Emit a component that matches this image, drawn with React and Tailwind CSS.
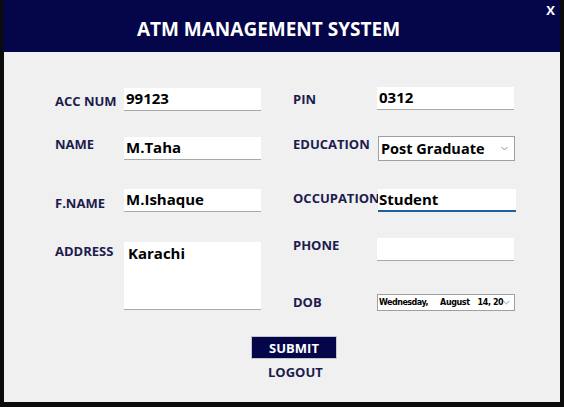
import React from 'react';

const label = 'text-[13px] leading-[18px] font-bold text-[#1c1c4e]';
const field = 'h-[23px] w-[137px] bg-white border-b border-[#a8a8a8] px-[2px] text-[15px] leading-[21px] font-bold text-black';

function Row({ className, children }) {
  return <div className={`flex items-start ${className}`}>{children}</div>;
}

export default function App() {
  return (
    <div
      className="w-[564px] h-[407px] bg-[#0b0b0b] pl-[3px] pr-[4px] pb-[5px] flex flex-col overflow-hidden"
      style={{ fontFamily: '"Open Sans", "Noto Sans", sans-serif' }}
    >
      {/* title bar */}
      <div className="relative h-[52px] bg-[#05064a] flex items-center justify-center pr-[26px] pt-[6px] shrink-0">
        <h1 className="text-white text-[19px] font-bold">ATM MANAGEMENT SYSTEM</h1>
        <span className="absolute right-[5px] top-[1px] text-white text-[13px] font-bold">X</span>
      </div>

      {/* form body */}
      <div className="flex-1 bg-[#f0f0f0] ml-[1px] flex flex-col">
        <div className="flex pl-[51px]">
          {/* left column */}
          <div className="flex flex-col w-[238px]">
            <Row className="mt-[36px]">
              <span className={`${label} w-[69px] mt-[4px]`}>ACC NUM</span>
              <div className={field}>99123</div>
            </Row>
            <Row className="mt-[24px]">
              <span className={`${label} w-[69px]`}>NAME</span>
              <div className={`${field} mt-[2px]`}>M.Taha</div>
            </Row>
            <Row className="mt-[29px]">
              <span className={`${label} w-[69px] mt-[5px]`}>F.NAME</span>
              <div className={field}>M.Ishaque</div>
            </Row>
            <Row className="mt-[30px]">
              <span className={`${label} w-[69px]`}>ADDRESS</span>
              <div className="h-[68px] w-[137px] bg-white border-b border-[#a8a8a8] px-[4px] pt-[1px] text-[15px] leading-[21px] font-bold text-black">
                Karachi
              </div>
            </Row>
          </div>

          {/* right column */}
          <div className="flex flex-col">
            <Row className="mt-[35px]">
              <span className={`${label} w-[84px] mt-[3px]`}>PIN</span>
              <div className={field}>0312</div>
            </Row>
            <Row className="mt-[25px]">
              <span className={`${label} w-[85px]`}>EDUCATION</span>
              <div className="mt-[1px] h-[25px] w-[137px] bg-white border border-[#a0a0a0] flex items-center justify-between pl-[2px] pr-[6px]">
                <span className="text-[14.5px] font-bold text-black leading-[20px]">Post Graduate</span>
                <svg width="7" height="5" viewBox="0 0 7 5" className="text-[#888]">
                  <path d="M0.5 1 L3.5 4 L6.5 1" fill="none" stroke="currentColor" strokeWidth="0.9" />
                </svg>
              </div>
            </Row>
            <Row className="mt-[28px]">
              <span className={`${label} w-[85px]`}>OCCUPATION</span>
              <div className="h-[23px] w-[138px] bg-white border-b-2 border-[#1f5fa6] px-[1px] text-[15px] leading-[21px] font-bold text-black">
                Student
              </div>
            </Row>
            <Row className="mt-[24px]">
              <span className={`${label} w-[84px]`}>PHONE</span>
              <div className={`${field} mt-[2px]`}></div>
            </Row>
            <Row className="mt-[32px]">
              <span className={`${label} w-[84px]`}>DOB</span>
              <div
                className="mt-[1px] h-[17px] w-[138px] bg-white border border-[#a0a0a0] flex items-center pl-[1px] pr-[4px] text-[8px] font-bold text-black whitespace-nowrap"
                style={{ fontFamily: '"DejaVu Sans", "Liberation Sans", sans-serif' }}
              >
                <span className="tracking-[-0.5px]">Wednesday,</span>
                <span className="ml-[12px] tracking-[-0.4px]">August</span>
                <span className="ml-[8px] tracking-[-0.4px]">14, 20</span>
                <svg width="7" height="5" viewBox="0 0 7 5" className="ml-auto text-[#888]">
                  <path d="M0.5 1 L3.5 4 L6.5 1" fill="none" stroke="currentColor" strokeWidth="0.9" />
                </svg>
              </div>
            </Row>
          </div>
        </div>

        {/* actions */}
        <div className="flex flex-col items-start pl-[247px] mt-[25px]">
          <button className="h-[23px] w-[86px] bg-[#05064a] border border-[#c6c6cc] text-white text-[13px] font-bold leading-[20px]">
            SUBMIT
          </button>
          <span className="ml-[17px] mt-[4px] text-[13px] font-bold text-[#1c1c4e] leading-[18px]">LOGOUT</span>
        </div>
      </div>
    </div>
  );
}
